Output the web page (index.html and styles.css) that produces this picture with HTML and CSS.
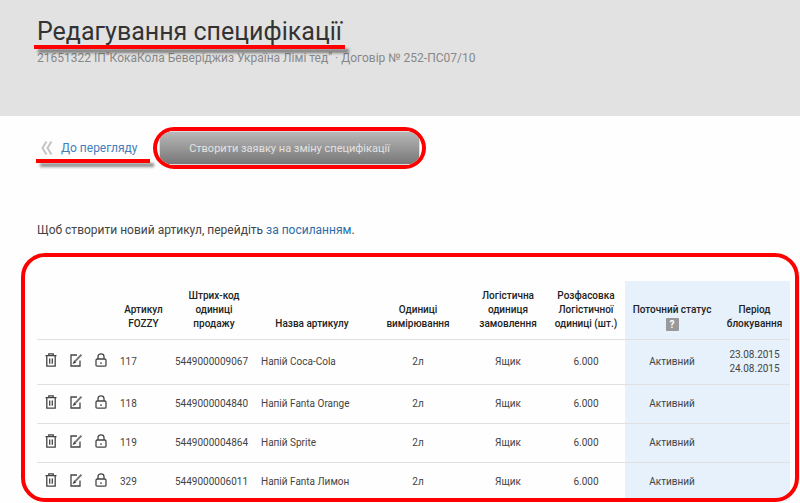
FILE: index.html
```html
<!DOCTYPE html>
<html lang="uk">
<head>
    <meta charset="UTF-8">
    <meta name="viewport" content="width=device-width, initial-scale=1.0">
    <title>Редагування специфікації</title>
    <link rel="stylesheet" href="styles.css">
</head>
<body>
    <svg class="sprite" aria-hidden="true">
        <symbol id="icon-trash" viewBox="0 0 12 14">
            <path d="M0.5 2.7H11.5M3.8 2.5V0.8H8.2V2.5M1.8 3V13.2H10.2V3M4.7 5.5V10.8M7.3 5.5V10.8" />
        </symbol>
        <symbol id="icon-edit" viewBox="0 0 12 14">
            <path d="M7 2H1V13H10V7.5M3.8 9.8L5.2 9.2L4.4 8.4Z" />
            <path class="pencil" d="M5 8.4L11.4 1.6" />
        </symbol>
        <symbol id="icon-lock" viewBox="0 0 12 14">
            <path d="M3 6V3.6C3 0 9 0 9 3.6V6M2.2 6H9.8Q11 6 11 7.2V12Q11 13.2 9.8 13.2H2.2Q1 13.2 1 12V7.2Q1 6 2.2 6ZM6 9.3V11" />
        </symbol>
    </svg>

    <header class="page-header">
        <h1><span class="underlined">Редагування специфікації</span></h1>
        <p>21651322 ІП"КокаКола Беверіджиз Україна Лімі тед" · Договір № 252-ПС07/10</p>
    </header>

    <main>
        <div class="actions">
            <a href="#" class="back underlined">
                <svg width="12" height="14" viewBox="0 0 12 14"><path d="M5.5 0.5L1.5 7L5.5 13.5M10.5 0.5L6.5 7L10.5 13.5" /></svg>
                До перегляду
            </a>
            <div class="highlight">
                <button type="button">Створити заявку на зміну специфікації</button>
            </div>
        </div>

        <p class="hint">Щоб створити новий артикул, перейдіть <a href="#">за посиланням</a>.</p>

        <div class="table-frame">
            <table>
                <colgroup>
                    <col class="col-tools">
                    <col class="col-article">
                    <col class="col-barcode">
                    <col class="col-name">
                    <col class="col-unit">
                    <col class="col-pack">
                    <col class="col-pack">
                    <col class="col-status">
                    <col class="col-period">
                </colgroup>
                <thead>
                    <tr>
                        <th></th>
                        <th>Артикул FOZZY</th>
                        <th>Штрих-код одиниці продажу</th>
                        <th>Назва артикулу</th>
                        <th>Одиниці вимірювання</th>
                        <th>Логістична одиниця замовлення</th>
                        <th>Розфасовка Логістичної одиниці (шт.)</th>
                        <th class="blue">Поточний статус <button type="button" class="help">?</button></th>
                        <th class="blue">Період блокування</th>
                    </tr>
                </thead>
                <tbody>
                    <tr>
                        <td>
                            <div class="tools">
                                <button type="button" aria-label="Видалити"><svg><use href="#icon-trash" /></svg></button>
                                <button type="button" aria-label="Редагувати"><svg><use href="#icon-edit" /></svg></button>
                                <button type="button" aria-label="Заблокувати"><svg><use href="#icon-lock" /></svg></button>
                            </div>
                        </td>
                        <td>117</td>
                        <td>5449000009067</td>
                        <td>Напій Coca-Cola</td>
                        <td class="center">2л</td>
                        <td class="center">Ящик</td>
                        <td class="center">6.000</td>
                        <td class="center blue">Активний</td>
                        <td class="center blue">23.08.2015 24.08.2015</td>
                    </tr>
                    <tr>
                        <td>
                            <div class="tools">
                                <button type="button" aria-label="Видалити"><svg><use href="#icon-trash" /></svg></button>
                                <button type="button" aria-label="Редагувати"><svg><use href="#icon-edit" /></svg></button>
                                <button type="button" aria-label="Заблокувати"><svg><use href="#icon-lock" /></svg></button>
                            </div>
                        </td>
                        <td>118</td>
                        <td>5449000004840</td>
                        <td>Напій Fanta Orange</td>
                        <td class="center">2л</td>
                        <td class="center">Ящик</td>
                        <td class="center">6.000</td>
                        <td class="center blue">Активний</td>
                        <td class="center blue"></td>
                    </tr>
                    <tr>
                        <td>
                            <div class="tools">
                                <button type="button" aria-label="Видалити"><svg><use href="#icon-trash" /></svg></button>
                                <button type="button" aria-label="Редагувати"><svg><use href="#icon-edit" /></svg></button>
                                <button type="button" aria-label="Заблокувати"><svg><use href="#icon-lock" /></svg></button>
                            </div>
                        </td>
                        <td>119</td>
                        <td>5449000004864</td>
                        <td>Напій Sprite</td>
                        <td class="center">2л</td>
                        <td class="center">Ящик</td>
                        <td class="center">6.000</td>
                        <td class="center blue">Активний</td>
                        <td class="center blue"></td>
                    </tr>
                    <tr>
                        <td>
                            <div class="tools">
                                <button type="button" aria-label="Видалити"><svg><use href="#icon-trash" /></svg></button>
                                <button type="button" aria-label="Редагувати"><svg><use href="#icon-edit" /></svg></button>
                                <button type="button" aria-label="Заблокувати"><svg><use href="#icon-lock" /></svg></button>
                            </div>
                        </td>
                        <td>329</td>
                        <td>5449000006011</td>
                        <td>Напій Fanta Лимон</td>
                        <td class="center">2л</td>
                        <td class="center">Ящик</td>
                        <td class="center">6.000</td>
                        <td class="center blue">Активний</td>
                        <td class="center blue"></td>
                    </tr>
                </tbody>
            </table>
        </div>
    </main>
</body>
</html>
```
FILE: styles.css
```css
* {
    margin: 0;
    padding: 0;
    box-sizing: border-box;
}

body {
    font-family: Roboto, Arial, sans-serif;
    font-size: 12px;
    line-height: 16px;
    background: #fefefe;
    color: #444;
}

a {
    color: #2a6da8;
    text-decoration: none;
}

button {
    font-family: inherit;
    border: none;
    cursor: pointer;
}

.sprite {
    display: none;
}

.page-header {
    background: #e2e2e2;
    padding: 16px 37px 50px;
}

.page-header h1 {
    font-size: 25px;
    font-weight: 400;
    line-height: 32px;
    color: #333;
}

.page-header p {
    margin-top: 2px;
    color: #888;
}

/* red marker lines */
.underlined {
    position: relative;
    display: inline-block;
}

.underlined::after {
    content: "";
    position: absolute;
    left: -3px;
    right: -3px;
    bottom: -1px;
    height: 4px;
    background: #f00;
    box-shadow: 4px 4px 3px rgba(0, 0, 0, 0.45);
}

.actions {
    display: flex;
    align-items: center;
    gap: 4px;
    padding: 11px 37px 0;
}

.back {
    display: flex;
    align-items: center;
    gap: 8px;
    width: 112px;
    height: 32px;
    padding-left: 4px;
    color: #3f7fbd;
}

.back::after {
    left: -1px;
    right: -1px;
    bottom: 1px;
}

.back svg {
    fill: none;
    stroke: #c4c4c4;
    stroke-width: 2;
}

.highlight {
    border: 4px solid #f00;
    border-radius: 21px;
    height: 42px;
    width: 273px;
    padding: 0 2px;
    overflow: hidden;
}

.highlight button {
    width: 100%;
    height: 34px;
    border: 1px solid #ddd;
    background: linear-gradient(#b8b8b8, #777);
    color: #e2e2e2;
    font-size: 11px;
}

.hint {
    padding: 53px 37px 15px;
}

.table-frame {
    position: relative;
    margin: 0 1px 0 21px;
    padding: 28px 9px 1px 16px;
}

.table-frame::after {
    content: "";
    position: absolute;
    inset: 0;
    border: 4px solid #f00;
    border-radius: 24px;
    pointer-events: none;
}

table {
    width: 100%;
    table-layout: fixed;
    border-collapse: collapse;
    font-size: 10px;
    line-height: 14px;
}

.col-tools { width: 79px; }
.col-article { width: 55px; }
.col-barcode { width: 86px; }
.col-unit { width: 102px; }
.col-pack { width: 78px; }
.col-status { width: 94px; }
.col-period { width: 71px; }

th {
    height: 58px;
    padding: 0 4px 8px;
    vertical-align: bottom;
    font-weight: 500;
    color: #222;
}

td {
    height: 39px;
    padding: 8px 4px;
    border-top: 1px solid #e0e0e0;
}

.center {
    text-align: center;
}

.blue {
    background: #e6f1fb;
}

.help {
    display: block;
    width: 13px;
    height: 13px;
    margin: 1px auto 0;
    border-radius: 1px;
    background: #999;
    color: #fff;
    font-size: 10px;
    font-weight: 700;
    line-height: 13px;
}

.tools {
    display: flex;
    gap: 13px;
    padding: 0 0 3px 4px;
}

.tools button {
    width: 12px;
    height: 14px;
    background: none;
}

.tools svg {
    display: block;
    width: 12px;
    height: 14px;
    fill: none;
    stroke: #444;
    stroke-width: 1.3;
}

.pencil {
    stroke: #777;
    stroke-width: 2;
}
```
